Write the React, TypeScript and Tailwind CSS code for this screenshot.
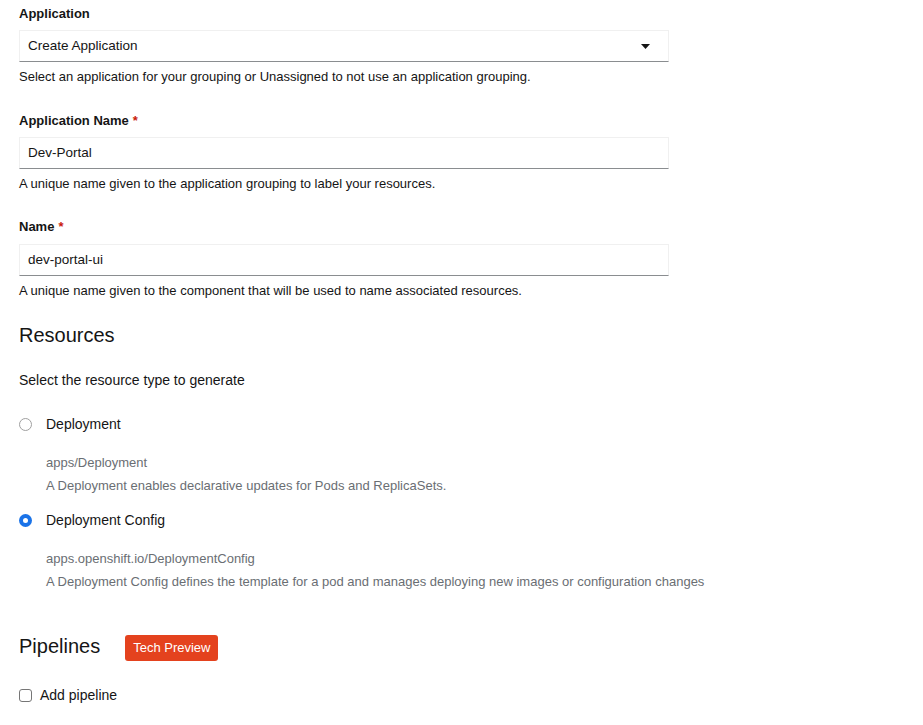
import React from 'react';

const font = { fontFamily: '"Liberation Sans", Arial, sans-serif' };

const Label = ({ text, required }: { text: string; required?: boolean }) => (
    <div className="h-5 leading-5 text-[13px] font-bold text-[#151515]">
        {text}
        {required && <span className="ml-1 text-[#c9190b]">*</span>}
    </div>
);

const Helper = ({ text, className }: { text: string; className?: string }) => (
    <div className={`h-[18px] leading-[18px] text-[13px] text-[#151515] ${className ?? ''}`}>{text}</div>
);

const TextBox = ({ value, caret, className }: { value: string; caret?: boolean; className?: string }) => (
    <div
        className={`w-[650px] h-8 flex items-center justify-between pl-2 pr-[18px] bg-white border border-[#f0f0f0] border-b-[#8a8d90] text-[13.5px] text-[#151515] ${className ?? ''}`}
    >
        <span>{value}</span>
        {caret && (
            <svg width="9" height="5" viewBox="0 0 9 5">
                <path d="M0 0h9L4.5 5z" fill="#151515" />
            </svg>
        )}
    </div>
);

const Radio = ({ checked }: { checked?: boolean }) =>
    checked ? (
        <div className="w-[13px] h-[13px] rounded-full bg-[#1a73e8] flex items-center justify-center">
            <div className="w-[5px] h-[5px] rounded-full bg-white" />
        </div>
    ) : (
        <div className="w-[13px] h-[13px] rounded-full border border-[#a0a0a0] bg-white" />
    );

const options = [
    {
        title: 'Deployment',
        kind: 'apps/Deployment',
        desc: 'A Deployment enables declarative updates for Pods and ReplicaSets.',
        checked: false,
    },
    {
        title: 'Deployment Config',
        kind: 'apps.openshift.io/DeploymentConfig',
        desc: 'A Deployment Config defines the template for a pod and manages deploying new images or configuration changes',
        checked: true,
    },
];

export default function App() {
    return (
        <div className="min-h-[725px] w-[923px] bg-white pl-[19px] pt-1 text-[#151515]" style={font}>
            <Label text="Application" />
            <TextBox value="Create Application" caret className="mt-[6px]" />
            <Helper text="Select an application for your grouping or Unassigned to not use an application grouping." className="mt-[6px]" />

            <div className="mt-[25px]">
                <Label text="Application Name" required />
            </div>
            <TextBox value="Dev-Portal" className="mt-[6px]" />
            <Helper text="A unique name given to the application grouping to label your resources." className="mt-[6px]" />

            <div className="mt-6">
                <Label text="Name" required />
            </div>
            <TextBox value="dev-portal-ui" className="mt-[7px]" />
            <Helper text="A unique name given to the component that will be used to name associated resources." className="mt-[6px]" />

            <h2 className="mt-[21px] h-7 leading-7 text-[20px] font-normal">Resources</h2>
            <div className="mt-[21px] h-5 leading-5 text-[14px]">Select the resource type to generate</div>

            {options.map((o, i) => (
                <div key={o.title} className={i === 0 ? 'mt-6' : 'mt-[15px]'}>
                    <div className="h-5 flex items-center gap-[14px]">
                        <Radio checked={o.checked} />
                        <span className="text-[14px] leading-5">{o.title}</span>
                    </div>
                    <div className="pl-[27px] text-[13px] text-[#6a6e73]">
                        <div className="mt-5 h-[18px] leading-[18px]">{o.kind}</div>
                        <div className="mt-[5px] h-[18px] leading-[18px]">{o.desc}</div>
                    </div>
                </div>
            ))}

            <div className="mt-[41px] h-7 flex items-center gap-[25px]">
                <h2 className="text-[20px] leading-7 font-normal">Pipelines</h2>
                <span className="mt-[4px] h-[26px] px-2 flex items-center rounded-[3px] bg-[#e4421e] text-white text-[13px]">
                    Tech Preview
                </span>
            </div>

            <label className="mt-[25px] h-5 flex items-center gap-2">
                <span className="w-[13px] h-[13px] rounded-[3px] border border-[#767676] bg-white" />
                <span className="text-[14px] leading-5">Add pipeline</span>
            </label>
        </div>
    );
}
